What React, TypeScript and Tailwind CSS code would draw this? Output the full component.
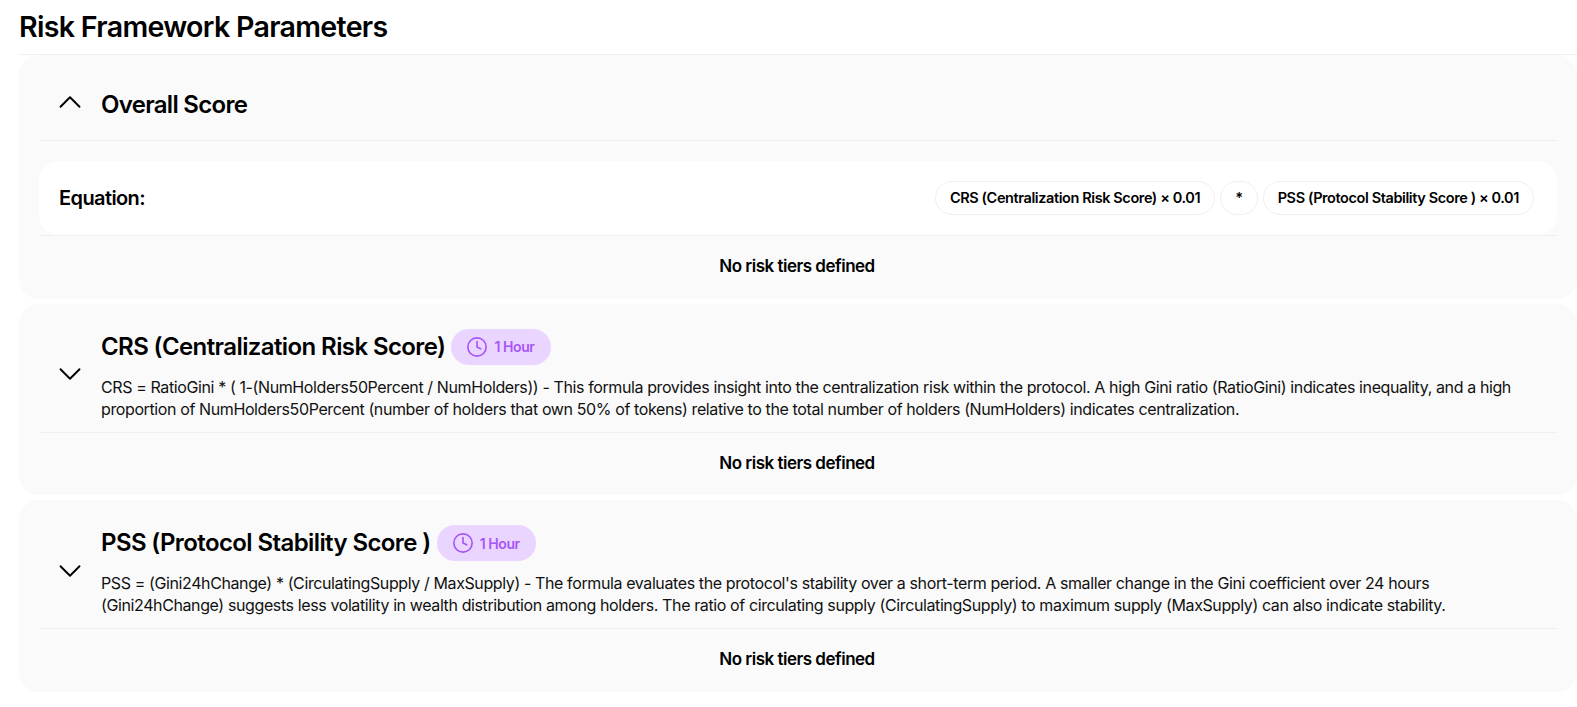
import { ChevronDown, ChevronUp, Clock } from 'lucide-react';

const metrics = [
  {
    title: 'CRS (Centralization Risk Score)',
    description:
      'CRS = RatioGini * ( 1-(NumHolders50Percent / NumHolders)) - This formula provides insight into the centralization risk within the protocol. A high Gini ratio (RatioGini) indicates inequality, and a high proportion of NumHolders50Percent (number of holders that own 50% of tokens) relative to the total number of holders (NumHolders) indicates centralization.',
  },
  {
    title: 'PSS (Protocol Stability Score )',
    description:
      "PSS = (Gini24hChange) * (CirculatingSupply / MaxSupply) - The formula evaluates the protocol's stability over a short-term period. A smaller change in the Gini coefficient over 24 hours (Gini24hChange) suggests less volatility in wealth distribution among holders. The ratio of circulating supply (CirculatingSupply) to maximum supply (MaxSupply) can also indicate stability.",
  },
];

function NoTiers() {
  return (
    <div className="flex h-[63.5px] items-center justify-center border-t border-[#efefef] pb-[1px] pr-[2px] text-[17px] font-semibold tracking-[-0.5px] text-black">
      No risk tiers defined
    </div>
  );
}

function Pill({ children }: { children: React.ReactNode }) {
  return (
    <span className="flex h-[34px] items-center rounded-full border border-[#efefef] bg-white px-[14px] text-[14.5px] font-semibold tracking-[-0.4px] text-black">
      {children}
    </span>
  );
}

export default function App() {
  return (
    <div className="min-h-[707px] bg-white pl-[19px] font-['Inter',sans-serif] text-black">
      <h1 className="flex h-[55px] items-center border-b border-[#efefef] text-[28.6px] font-semibold tracking-[-0.7px]">
        Risk Framework Parameters
      </h1>

      <div className="flex flex-col gap-[5px]">
        <section className="rounded-[20px] bg-[#fafafa] px-5">
          <div className="flex h-[86px] items-center gap-[12px] border-b border-[#efefef]">
            <ChevronUp className="ml-[12px] mt-[9px] h-[38px] w-[38px] shrink-0" strokeWidth={1.2} />
            <h2 className="mt-[14px] text-[24px] font-semibold tracking-[-0.7px]">Overall Score</h2>
          </div>
          <div className="mt-[20px] flex h-[74px] items-center justify-between rounded-[20px] bg-white pl-5 pr-[23px]">
            <span className="text-[20px] font-semibold tracking-[-0.6px]">Equation:</span>
            <div className="flex items-center gap-[5px]">
              <Pill>CRS (Centralization Risk Score) × 0.01</Pill>
              <Pill>*</Pill>
              <Pill>PSS (Protocol Stability Score ) × 0.01</Pill>
            </div>
          </div>
          <NoTiers />
        </section>

        {metrics.map((metric) => (
          <section key={metric.title} className="rounded-[20px] bg-[#fafafa] px-5">
            <div className="flex items-center gap-[12px] pb-[12px] pt-[25px]">
              <ChevronDown className="ml-[12px] h-[38px] w-[38px] shrink-0" strokeWidth={1.2} />
              <div>
                <div className="flex items-center gap-[6px]">
                  <h2 className="text-[24px] font-semibold tracking-[-0.6px]">{metric.title}</h2>
                  <span className="flex h-[36px] items-center gap-[6px] rounded-full bg-[#e9d5ff] pl-[15px] pr-[16px] text-[14px] font-semibold tracking-[-0.4px] text-[#a855f7]">
                    <Clock className="h-[22px] w-[22px]" strokeWidth={1.8} />
                    1 Hour
                  </span>
                </div>
                <p className="mt-[11px] max-w-[1430px] text-[16px] leading-[22px] tracking-[-0.39px] text-[#111]">
                  {metric.description}
                </p>
              </div>
            </div>
            <NoTiers />
          </section>
        ))}
      </div>
    </div>
  );
}
